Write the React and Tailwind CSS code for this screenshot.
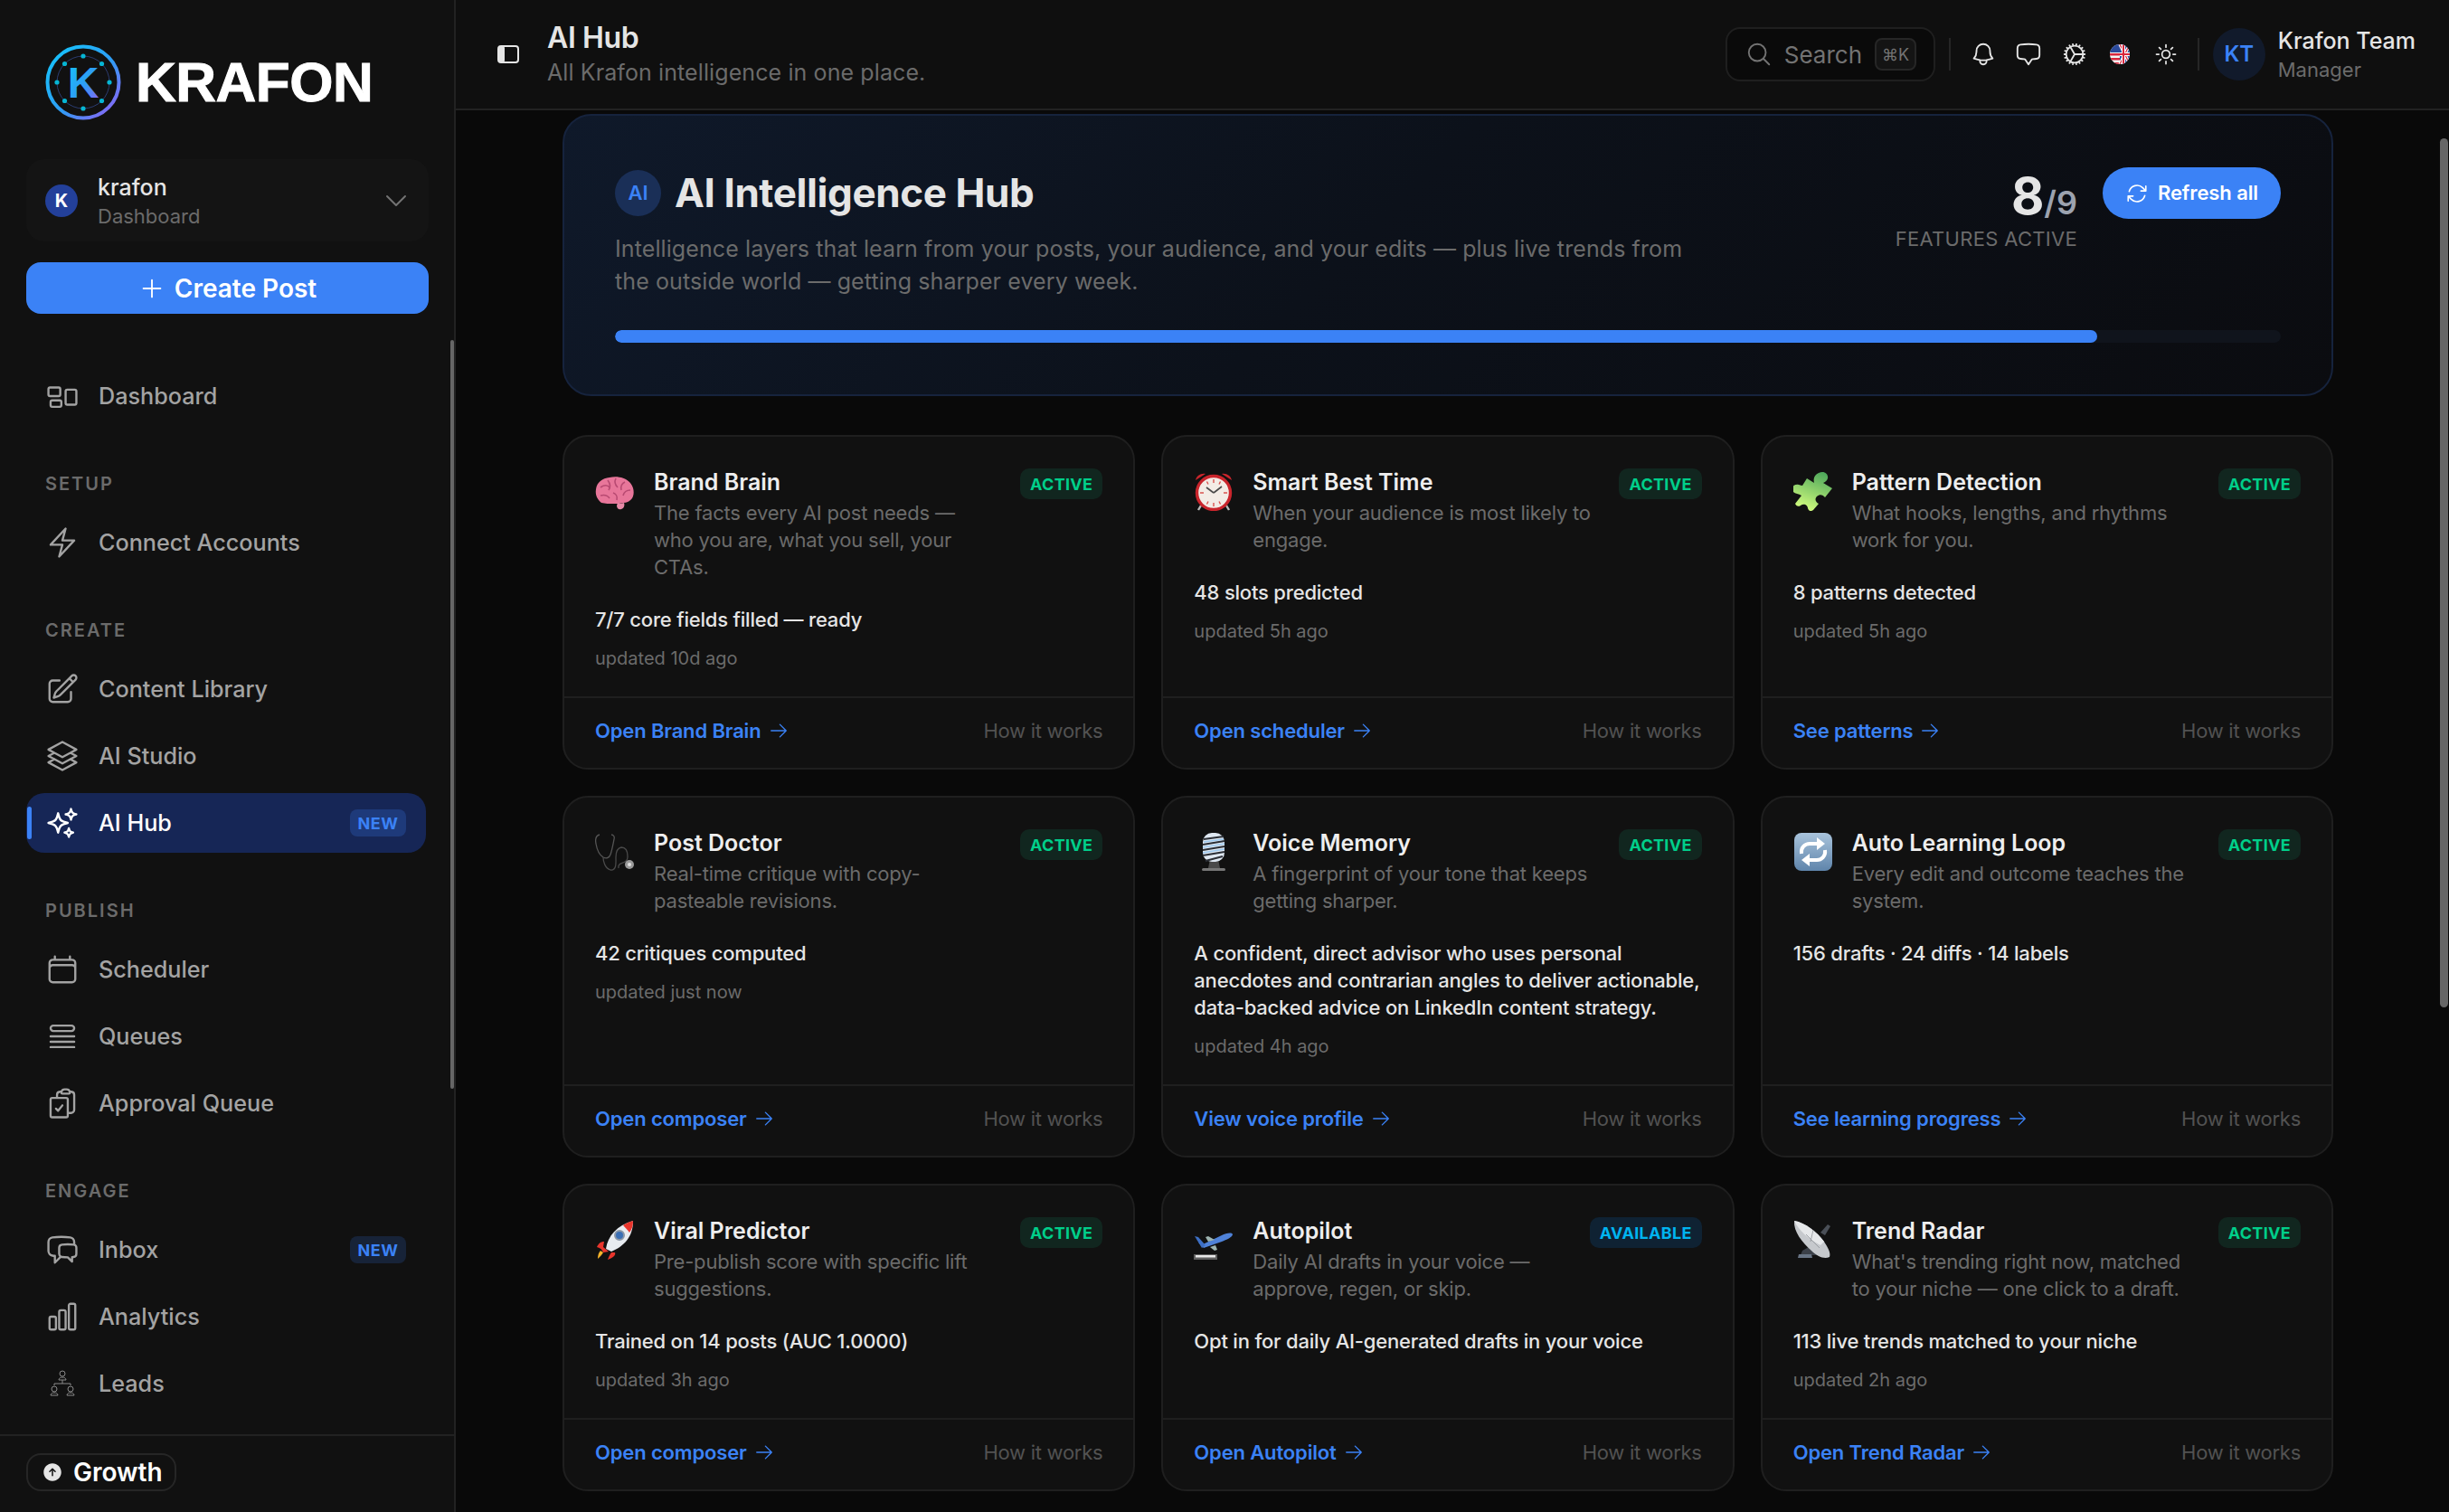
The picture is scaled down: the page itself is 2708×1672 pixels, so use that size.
import {
  HiOutlineRectangleGroup, HiOutlineBolt, HiOutlinePencilSquare, HiOutlineSquare3Stack3D, HiOutlineSparkles,
  HiOutlineCalendar, HiOutlineQueueList, HiOutlineClipboardDocumentCheck, HiOutlineChatBubbleLeftRight,
  HiOutlineChartBar, HiOutlineChevronDown, HiOutlinePlus, HiOutlineMagnifyingGlass, HiOutlineBell,
  HiOutlineChatBubbleBottomCenter, HiOutlineCog, HiOutlineSun, HiOutlineArrowPath, HiOutlineArrowRight, HiArrowUpCircle,
} from 'react-icons/hi2';

function Logo() {
  const dots = [[42, 13], [62.5, 21.5], [71, 42], [62.5, 62.5], [42, 71], [21.5, 62.5], [13, 42], [21.5, 21.5]];
  return (
    <svg viewBox="0 0 84 84" className="w-[84px] h-[84px] shrink-0">
      <defs>
        <linearGradient id="lg-ring" x1="0" y1="0" x2="1" y2="1">
          <stop offset="0" stopColor="#12c8fb" />
          <stop offset="0.55" stopColor="#2f9cf5" />
          <stop offset="1" stopColor="#9a5cf6" />
        </linearGradient>
      </defs>
      <circle cx="42" cy="42" r="39.5" fill="none" stroke="url(#lg-ring)" strokeWidth="4" />
      <circle cx="42" cy="42" r="29" fill="none" stroke="#2b3c70" strokeWidth="1" />
      {dots.map(([x, y]) => <circle key={x + '-' + y} cx={x} cy={y} r="2.6" fill="#06b6d4" />)}
      <text x="42" y="59" textAnchor="middle" fontFamily="Liberation Sans" fontWeight="700" fontSize="48" fill="url(#lg-ring)">K</text>
    </svg>
  );
}

function LeadsIcon({ className }) {
  return (
    <svg viewBox="0 0 38 38" fill="none" stroke="#8a8a8a" strokeWidth="1" className={className}>
      <circle cx="19" cy="8" r="3" />
      <path d="M15 15c0-2 2-3 4-3s4 1 4 3z" />
      <path d="M19 15v4M10 19h18v2M10 19v2" />
      <circle cx="10" cy="25" r="3" />
      <path d="M6 32c0-2 2-3 4-3s4 1 4 3z" />
      <circle cx="28" cy="25" r="3" />
      <path d="M24 32c0-2 2-3 4-3s4 1 4 3z" />
    </svg>
  );
}

function Flag() {
  return (
    <svg viewBox="0 0 22 22" className="w-[22px] h-[22px]">
      <defs><clipPath id="fl"><circle cx="11" cy="11" r="11" /></clipPath></defs>
      <g clipPath="url(#fl)">
        <rect width="22" height="22" fill="#f4f4f4" />
        <path d="M0 10h11v2.5H0zM0 15h11v2.5H0zM0 20h11v2H0z" fill="#d8263c" />
        <rect width="11" height="9" fill="#2b4a9c" />
        <rect x="11" width="11" height="22" fill="#2b4a9c" />
        <path d="M11 0l11 22M22 0L11 22" stroke="#fff" strokeWidth="3.4" />
        <path d="M11 0l11 22M22 0L11 22" stroke="#d8263c" strokeWidth="1.2" />
        <path d="M15 0v22M11 11h11" stroke="#fff" strokeWidth="4" />
        <path d="M15 0v22M11 11h11" stroke="#d8263c" strokeWidth="2" />
      </g>
    </svg>
  );
}

function BrainEmoji() {
  return (
    <svg viewBox="0 0 44 44" className="w-[44px] h-[44px]">
      <path d="M7 35C2 31 0 26 1 20 2 12 8 8 16 7c8-2 17 0 22 5 5 5 6 13 3 18-2 3-6 5-10 5-3 1-7 1-11 1-4 0-9 0-13-1z" fill="#e8769a" />
      <path d="M6 18c4-3 8-3 10 0M14 10c3 4 3 8 1 11M23 8c-2 4-1 7 2 10M33 12c-4 2-5 5-4 9M39 21c-4 0-7 2-8 6M6 27c4-1 8 0 10 3M20 24c3 1 5 4 4 8" stroke="#b84a72" strokeWidth="1.6" fill="none" />
      <path d="M25 35c2 1 4 1 7 0 1 3 0 6-3 7-3 1-5-1-5-4z" fill="#e88aa8" />
    </svg>
  );
}

function ClockEmoji() {
  return (
    <svg viewBox="0 0 44 44" className="w-[44px] h-[44px]">
      <path d="M8 38l-3 5M36 38l3 5" stroke="#b9b9b9" strokeWidth="2.4" />
      <path d="M2 10c1-5 6-8 11-7zM42 10c-1-5-6-8-11-7z" fill="#c9252c" />
      <circle cx="22" cy="24" r="18.5" fill="#f3ece6" stroke="#c9252c" strokeWidth="3.4" />
      <path d="M22 9v4M22 35v4M7 24h4M33 24h4M14.5 11.5l1.5 3M29.5 11.5l-1.5 3M14.5 36.5l1.5-3M29.5 36.5l-1.5-3" stroke="#d9534f" strokeWidth="1.4" />
      <path d="M22 24l-8-6M22 24l9-7" stroke="#4a4a4a" strokeWidth="1.6" />
    </svg>
  );
}

function PuzzleEmoji() {
  return (
    <svg viewBox="0 0 44 44" className="w-[44px] h-[44px]">
      <defs>
        <linearGradient id="pz" x1="0.7" y1="0" x2="0.3" y2="1">
          <stop offset="0" stopColor="#4fa85b" />
          <stop offset="1" stopColor="#d6ff7f" />
        </linearGradient>
      </defs>
      <path d="M15 8l8 5c-1-4 0-9 5-11 6-3 11 1 10 6-1 3-3 4-5 5l10 6-8 10c-2-3-6-4-9-1-3 3-1 7 2 8l-6 7c-3 2-5 1-6-2 0-3-4-6-8-3-3 2-5 0-6-2l7-9c-3-2-7-2-9-4-3-4 0-8 3-8 3-1 5 1 7 1z" fill="url(#pz)" />
    </svg>
  );
}

function StethoscopeEmoji() {
  return (
    <svg viewBox="0 0 44 44" fill="none" className="w-[44px] h-[44px]">
      <path d="M5 3C1 4 0 8 1 13c1 6 3 12 8 15 4 2 7 0 8-3 2-6 3-12 4-17 1-3-1-5-3-5" stroke="#555" strokeWidth="1.3" />
      <path d="M9 28c0 5 2 12 8 14 7 1 6-8 6-14 0-5 1-10 6-11 6 0 7 6 7 10 0 3-1 5-3 6-4 2-8 2-7 7" stroke="#4a4a4a" strokeWidth="1.3" />
      <circle cx="38" cy="36" r="5" fill="#9a9a9a" />
      <circle cx="38" cy="36" r="2" fill="#e0e0e0" />
    </svg>
  );
}

function MicEmoji() {
  return (
    <svg viewBox="0 0 44 44" className="w-[44px] h-[44px]">
      <rect x="9" y="40" width="26" height="3" rx="1.5" fill="#777" />
      <path d="M18 30h9l2 10H16z" fill="#4a4a4a" />
      <rect x="10" y="1" width="24" height="32" rx="10" fill="#dfe8f2" />
      <path d="M11 8l22-3M10 14l24-4M10 20l24-4M10 26l24-4M13 32l19-5" stroke="#2b2f36" strokeWidth="2.2" />
      <path d="M11 11l22-3M10 17l24-4M10 23l24-4" stroke="#9cc8ee" strokeWidth="1.4" />
    </svg>
  );
}

function RepeatEmoji() {
  return (
    <svg viewBox="0 0 44 44" fill="none" className="w-[44px] h-[44px]">
      <defs>
        <linearGradient id="rp" x1="0" y1="0" x2="0" y2="1">
          <stop offset="0" stopColor="#a9c4dc" />
          <stop offset="1" stopColor="#5f85ab" />
        </linearGradient>
      </defs>
      <rect x="1" y="1" width="42" height="42" rx="8" fill="url(#rp)" />
      <path d="M9 24c-1-7 4-11 9-11h9" stroke="#fff" strokeWidth="4" />
      <path d="M26 6l9 7-9 7z" fill="#fff" />
      <path d="M35 20c1 7-4 11-9 11h-9" stroke="#fff" strokeWidth="4" />
      <path d="M18 38l-9-7 9-7z" fill="#fff" />
    </svg>
  );
}

function RocketEmoji() {
  return (
    <svg viewBox="0 0 44 44" className="w-[44px] h-[44px]">
      <path d="M2 30c2-4 4-6 8-6l-1 6 6 5-6 1c-1-3-3-5-7-6z" fill="#e8352c" />
      <path d="M18 36l4 0c1 3-1 5-8 8 1-3 2-5 4-8z" fill="#e8352c" />
      <path d="M9 36c-1 2-3 4-6 7 0-4 1-7 3-9z" fill="#f7b32b" />
      <path d="M12 32C14 18 24 6 42 1c0 18-10 28-24 34z" fill="#e7ebf0" />
      <path d="M42 1c-5 1-8 3-11 5 2 2 5 5 7 8 3-4 4-8 4-13z" fill="#e8352c" />
      <circle cx="27" cy="17" r="5" fill="#3a6fb5" stroke="#8a96a6" strokeWidth="2" />
    </svg>
  );
}

function PlaneEmoji() {
  return (
    <svg viewBox="0 0 44 44" className="w-[44px] h-[44px]">
      <path d="M5 25l6 6 20-7c5-2 12-5 12-8-1-3-8-1-12 1L10 27z" fill="#4f82d8" />
      <path d="M1 18l4 1 8 9-4 3z" fill="#3d6fc4" />
      <path d="M16 24l-3-5 3-1 7 4zM18 30l6-2 2 5-3 1z" fill="#9db4b0" />
      <rect x="0" y="38" width="26" height="6" fill="#5f5f5f" />
      <rect x="2" y="39" width="22" height="2.5" fill="#e8e8e8" />
    </svg>
  );
}

function DishEmoji() {
  return (
    <svg viewBox="0 0 44 44" className="w-[44px] h-[44px]">
      <path d="M10 34l12-7 6 12H8z" fill="#3b4048" />
      <path d="M6 38h14l1 4H5z" fill="#687484" />
      <path d="M30 14l8-9 3 2-6 10z" fill="#4a4f57" />
      <path d="M1 1c12 2 25 12 33 23 3 5 8 12 6 17-6 3-14-1-20-7C10 25 0 13 1 1z" fill="#c6c9cd" />
      <path d="M1 1c12 2 25 12 33 23l-4 4C18 22 6 12 1 1z" fill="#e6e8ea" />
      <path d="M14 16l15 15M22 11l-3 13" stroke="#8f9398" strokeWidth="0.8" />
    </svg>
  );
}

function NavItem({ icon: Icon, label, badge, active }) {
  return (
    <div className={`relative h-[66px] flex items-center rounded-[20px] ${active ? 'bg-[#162656] text-white w-[442px]' : 'text-[#a3a3a3] w-[445px]'}`}>
      {active && <span className="absolute left-[1px] top-[15px] h-[36px] w-[5px] rounded-full bg-[#3b82f6]" />}
      <span className="w-[80px] pl-[21px] shrink-0 flex">
        <Icon className="w-[38px] h-[38px]" />
      </span>
      <span className="pt-[2px] text-[25.2px] font-medium">{label}</span>
      {badge && (
        <span className={`ml-auto ${active ? 'mr-[22px] bg-[#1e3a7a]' : 'mr-[25px] bg-[#172338]'} w-[62px] h-[30px] rounded-[8px] flex items-center justify-center text-[18px] font-bold tracking-[0.5px] text-[#3b82f6]`}>
          NEW
        </span>
      )}
    </div>
  );
}

function NavGroup({ title, children }) {
  return (
    <div className="mt-[48px]">
      <div className="pl-[21px] h-[30px] mb-[18px] leading-[32px] text-[20px] font-semibold tracking-[2px] text-[#6b6b6b]">{title}</div>
      <div className="flex flex-col gap-[8px]">{children}</div>
    </div>
  );
}

function Sidebar() {
  return (
    <aside className="relative w-[504px] h-full shrink-0 bg-[#111111] border-r-2 border-[#222222] flex flex-col">
      <div className="flex-1 overflow-hidden pl-[29px]">
        <div className="h-[176px] pt-[49px] pl-[21px] flex items-start gap-[16px]">
          <Logo />
          <span className="font-['Liberation_Sans'] font-bold text-[62px] tracking-[-0.5px] leading-[84px] text-white [-webkit-text-stroke:1px_white]">KRAFON</span>
        </div>
        <div className="w-[445px] h-[91px] bg-[#141414] rounded-[20px] flex items-center pl-[21px] pr-[20px]">
          <span className="w-[36px] h-[36px] rounded-full bg-[#23409a] flex items-center justify-center text-white text-[20px] font-bold">K</span>
          <div className="ml-[22px] pt-[3px]">
            <div className="text-[25px] leading-[32px] font-medium text-[#e5e5e5]">krafon</div>
            <div className="text-[22px] leading-[32px] text-[#6b6b6b]">Dashboard</div>
          </div>
          <HiOutlineChevronDown className="ml-auto w-[32px] h-[32px] text-[#737373]" />
        </div>
        <div className="mt-[23px] w-[445px] h-[57px] bg-[#3b82f6] rounded-[16px] flex items-center justify-center gap-[10px] text-white text-[28px] font-semibold">
          <HiOutlinePlus className="w-[30px] h-[30px]" />
          Create Post
        </div>
        <div className="mt-[58px]">
          <NavItem icon={HiOutlineRectangleGroup} label="Dashboard" />
        </div>
        <NavGroup title="SETUP">
          <NavItem icon={HiOutlineBolt} label="Connect Accounts" />
        </NavGroup>
        <NavGroup title="CREATE">
          <NavItem icon={HiOutlinePencilSquare} label="Content Library" />
          <NavItem icon={HiOutlineSquare3Stack3D} label="AI Studio" />
          <NavItem icon={HiOutlineSparkles} label="AI Hub" badge active />
        </NavGroup>
        <NavGroup title="PUBLISH">
          <NavItem icon={HiOutlineCalendar} label="Scheduler" />
          <NavItem icon={HiOutlineQueueList} label="Queues" />
          <NavItem icon={HiOutlineClipboardDocumentCheck} label="Approval Queue" />
        </NavGroup>
        <NavGroup title="ENGAGE">
          <NavItem icon={HiOutlineChatBubbleLeftRight} label="Inbox" badge />
          <NavItem icon={HiOutlineChartBar} label="Analytics" />
          <NavItem icon={LeadsIcon} label="Leads" />
        </NavGroup>
      </div>
      <div className="h-[86px] shrink-0 border-t-2 border-[#222222] pl-[29px] pt-[19px]">
        <div className="w-[166px] h-[42px] border-2 border-[#262626] rounded-[16px] flex items-center pl-[15px] gap-[11px] text-white text-[28px] font-semibold">
          <HiArrowUpCircle className="w-[24px] h-[24px] text-[#e5e5e5]" />
          Growth
        </div>
      </div>
      <span className="absolute right-0 top-[376px] h-[828px] w-[4px] bg-[#666666] rounded-full" />
    </aside>
  );
}

function TopBar() {
  const icons = [HiOutlineBell, HiOutlineChatBubbleBottomCenter, HiOutlineCog];
  return (
    <header className="h-[122px] shrink-0 bg-[#0f0f0f] border-b-2 border-[#222222] flex items-center pl-[46px] pr-[37px]">
      <svg viewBox="0 0 24 20" className="w-[24px] h-[20px] text-[#e5e5e5]">
        <rect x="1" y="1" width="22" height="18" rx="3" fill="none" stroke="currentColor" strokeWidth="2" />
        <rect x="1" y="1" width="7" height="18" rx="2" fill="currentColor" />
      </svg>
      <div className="ml-[31px] mt-[1px]">
        <div className="text-[32px] leading-[36px] font-semibold text-[#e5e5e5] tracking-[-0.4px]">AI Hub</div>
        <div className="text-[25px] leading-[36px] mt-[2px] tracking-[0.1px] text-[#6b6b6b]">All Krafon intelligence in one place.</div>
      </div>
      <div className="ml-auto w-[232px] h-[60px] bg-[#0a0a0a] border-2 border-[#1f1f1f] rounded-[16px] flex items-center pl-[20px]">
        <HiOutlineMagnifyingGlass className="w-[30px] h-[30px] text-[#737373]" />
        <span className="ml-[13px] text-[26px] text-[#737373]">Search</span>
        <span className="ml-[14px] w-[46px] h-[36px] rounded-[8px] border-2 border-[#262626] bg-[#141414] flex items-center justify-center text-[18px] text-[#737373]">⌘K</span>
      </div>
      <span className="ml-[15px] w-[2px] h-[36px] bg-[#262626]" />
      <div className="flex items-center ml-[21px] gap-[20.5px]">
        {icons.map((Icon, i) => <Icon key={i} className="w-[30px] h-[30px] text-[#e5e5e5]" />)}
        <span className="w-[30px] flex justify-center"><Flag /></span>
        <span className="w-[30px] flex justify-center"><HiOutlineSun className="w-[28px] h-[28px] text-[#e5e5e5]" /></span>
      </div>
      <span className="ml-[20px] w-[2px] h-[36px] bg-[#262626]" />
      <span className="ml-[15px] w-[58px] h-[58px] rounded-full bg-[#111a2b] flex items-center justify-center text-[#3b82f6] text-[24px] font-semibold">KT</span>
      <div className="ml-[14px]">
        <div className="text-[25px] leading-[34px] font-medium text-[#e5e5e5]">Krafon Team</div>
        <div className="text-[22px] leading-[30px] text-[#6b6b6b]">Manager</div>
      </div>
    </header>
  );
}

function Hero() {
  return (
    <section className="h-[312px] rounded-[32px] border-2 border-[#16233d] bg-[linear-gradient(135deg,#0f192a_0%,#0c111a_45%,#0b0c10_100%)] pl-[56px] pr-[56px] pt-[56px]">
      <div className="flex items-start justify-between h-[150px]">
        <div>
          <div className="flex items-center gap-[15px] mt-[4px]">
            <span className="w-[51px] h-[51px] rounded-full bg-[#1a2f57] flex items-center justify-center text-[#3b82f6] text-[22px] font-semibold">AI</span>
            <h1 className="text-[44px] leading-[51px] font-bold text-[#e5e5e5] tracking-[-0.4px]">AI Intelligence Hub</h1>
          </div>
          <p className="mt-[18px] w-[1200px] text-[25px] leading-[36px] tracking-[0.1px] text-[#6b6b6b]">
            Intelligence layers that learn from your posts, your audience, and your edits — plus live trends from the outside world — getting sharper every week.
          </p>
        </div>
        <div className="flex items-start gap-[28px]">
          <div className="flex flex-col items-end">
            <div className="h-[48px] mt-[5px] flex items-baseline">
              <span className="text-[56px] leading-none font-bold text-[#e5e5e5]">8</span>
              <span className="text-[36px] leading-none font-semibold text-[#9ca3af]">/9</span>
            </div>
            <div className="text-[22px] leading-[30px] mt-[12px] tracking-[0.3px] text-[#6b6b6b]">FEATURES ACTIVE</div>
          </div>
          <div className="h-[57px] w-[197px] mt-[1px] rounded-full bg-[#3b82f6] flex items-center justify-center gap-[10px] text-white text-[22px] tracking-[-0.1px] font-semibold">
            <HiOutlineArrowPath className="w-[26px] h-[26px]" />
            Refresh all
          </div>
        </div>
      </div>
      <div className="mt-[31px] h-[14px] rounded-full bg-[#10141c] overflow-hidden">
        <div className="h-full rounded-full bg-[#3b82f6]" style={{ width: '89%' }} />
      </div>
    </section>
  );
}

const cards = [
  { emoji: BrainEmoji, title: 'Brand Brain', desc: 'The facts every AI post needs — who you are, what you sell, your CTAs.', stat: '7/7 core fields filled — ready', updated: 'updated 10d ago', link: 'Open Brand Brain' },
  { emoji: ClockEmoji, title: 'Smart Best Time', desc: 'When your audience is most likely to engage.', stat: '48 slots predicted', updated: 'updated 5h ago', link: 'Open scheduler' },
  { emoji: PuzzleEmoji, title: 'Pattern Detection', desc: 'What hooks, lengths, and rhythms work for you.', stat: '8 patterns detected', updated: 'updated 5h ago', link: 'See patterns' },
  { emoji: StethoscopeEmoji, title: 'Post Doctor', desc: 'Real-time critique with copy-pasteable revisions.', stat: '42 critiques computed', updated: 'updated just now', link: 'Open composer' },
  { emoji: MicEmoji, title: 'Voice Memory', desc: 'A fingerprint of your tone that keeps getting sharper.', stat: 'A confident, direct advisor who uses personal anecdotes and contrarian angles to deliver actionable, data-backed advice on LinkedIn content strategy.', updated: 'updated 4h ago', link: 'View voice profile' },
  { emoji: RepeatEmoji, title: 'Auto Learning Loop', desc: 'Every edit and outcome teaches the system.', stat: '156 drafts · 24 diffs · 14 labels', link: 'See learning progress' },
  { emoji: RocketEmoji, title: 'Viral Predictor', desc: 'Pre-publish score with specific lift suggestions.', stat: 'Trained on 14 posts (AUC 1.0000)', updated: 'updated 3h ago', link: 'Open composer' },
  { emoji: PlaneEmoji, title: 'Autopilot', desc: 'Daily AI drafts in your voice — approve, regen, or skip.', stat: 'Opt in for daily AI-generated drafts in your voice', link: 'Open Autopilot', available: true },
  { emoji: DishEmoji, title: 'Trend Radar', desc: "What's trending right now, matched to your niche — one click to a draft.", stat: '113 live trends matched to your niche', updated: 'updated 2h ago', link: 'Open Trend Radar' },
];

function FeatureCard({ card }) {
  const Emoji = card.emoji;
  return (
    <article className="rounded-[28px] border-2 border-[#1f1f1f] bg-[#111111] flex flex-col">
      <div className="flex-1 pt-[35px] px-[34px] pb-[27px]">
        <div className="flex items-start">
          <span className="w-[44px] shrink-0 mt-[3px] mr-[21px]"><Emoji /></span>
          <div className="flex-1 min-w-0">
            <h3 className="text-[25px] leading-[30px] font-semibold text-[#eeeeee]">{card.title}</h3>
            <p className="mt-[4px] text-[22px] leading-[30px] tracking-[-0.2px] text-[#6b6b6b]">{card.desc}</p>
          </div>
          {card.available ? (
            <span className="ml-[27px] shrink-0 h-[34px] px-[11px] rounded-[10px] bg-[#0f2233] flex items-center text-[18px] font-bold tracking-[0.3px] text-[#00b4f0]">AVAILABLE</span>
          ) : (
            <span className="ml-[27px] shrink-0 h-[34px] px-[11px] rounded-[10px] bg-[#11261f] flex items-center text-[18px] font-bold tracking-[0.3px] text-[#00cf8a]">ACTIVE</span>
          )}
        </div>
        <p className="mt-[28px] text-[22px] leading-[30px] tracking-[-0.2px] font-medium text-[#e5e5e5]">{card.stat}</p>
        {card.updated && <p className="mt-[13px] text-[20px] leading-[30px] text-[#6b6b6b]">{card.updated}</p>}
      </div>
      <div className="h-[79px] shrink-0 border-t-2 border-[#1f1f1f] px-[34px] pb-[5px] flex items-center justify-between">
        <span className="flex items-center gap-[8px] text-[22px] tracking-[-0.15px] font-semibold text-[#3b82f6]">
          {card.link}
          <HiOutlineArrowRight className="w-[22px] h-[22px]" />
        </span>
        <span className="text-[22px] tracking-[-0.27px] text-[#525252]">How it works</span>
      </div>
    </article>
  );
}

export default function App() {
  return (
    <div className="flex h-screen w-full overflow-hidden bg-[#090909] font-[Inter,sans-serif]">
      <Sidebar />
      <div className="relative flex-1 min-w-0 flex flex-col">
        <TopBar />
        <main className="flex-1 overflow-hidden pl-[118px] pr-[128px] pt-[4px]">
          <Hero />
          <div className="mt-[43px] grid grid-cols-3 gap-[29px]">
            {cards.map((card) => <FeatureCard key={card.title} card={card} />)}
          </div>
        </main>
        <span className="absolute right-[1px] top-[153px] h-[961px] w-[9px] rounded-full bg-[#666666]" />
      </div>
    </div>
  );
}
